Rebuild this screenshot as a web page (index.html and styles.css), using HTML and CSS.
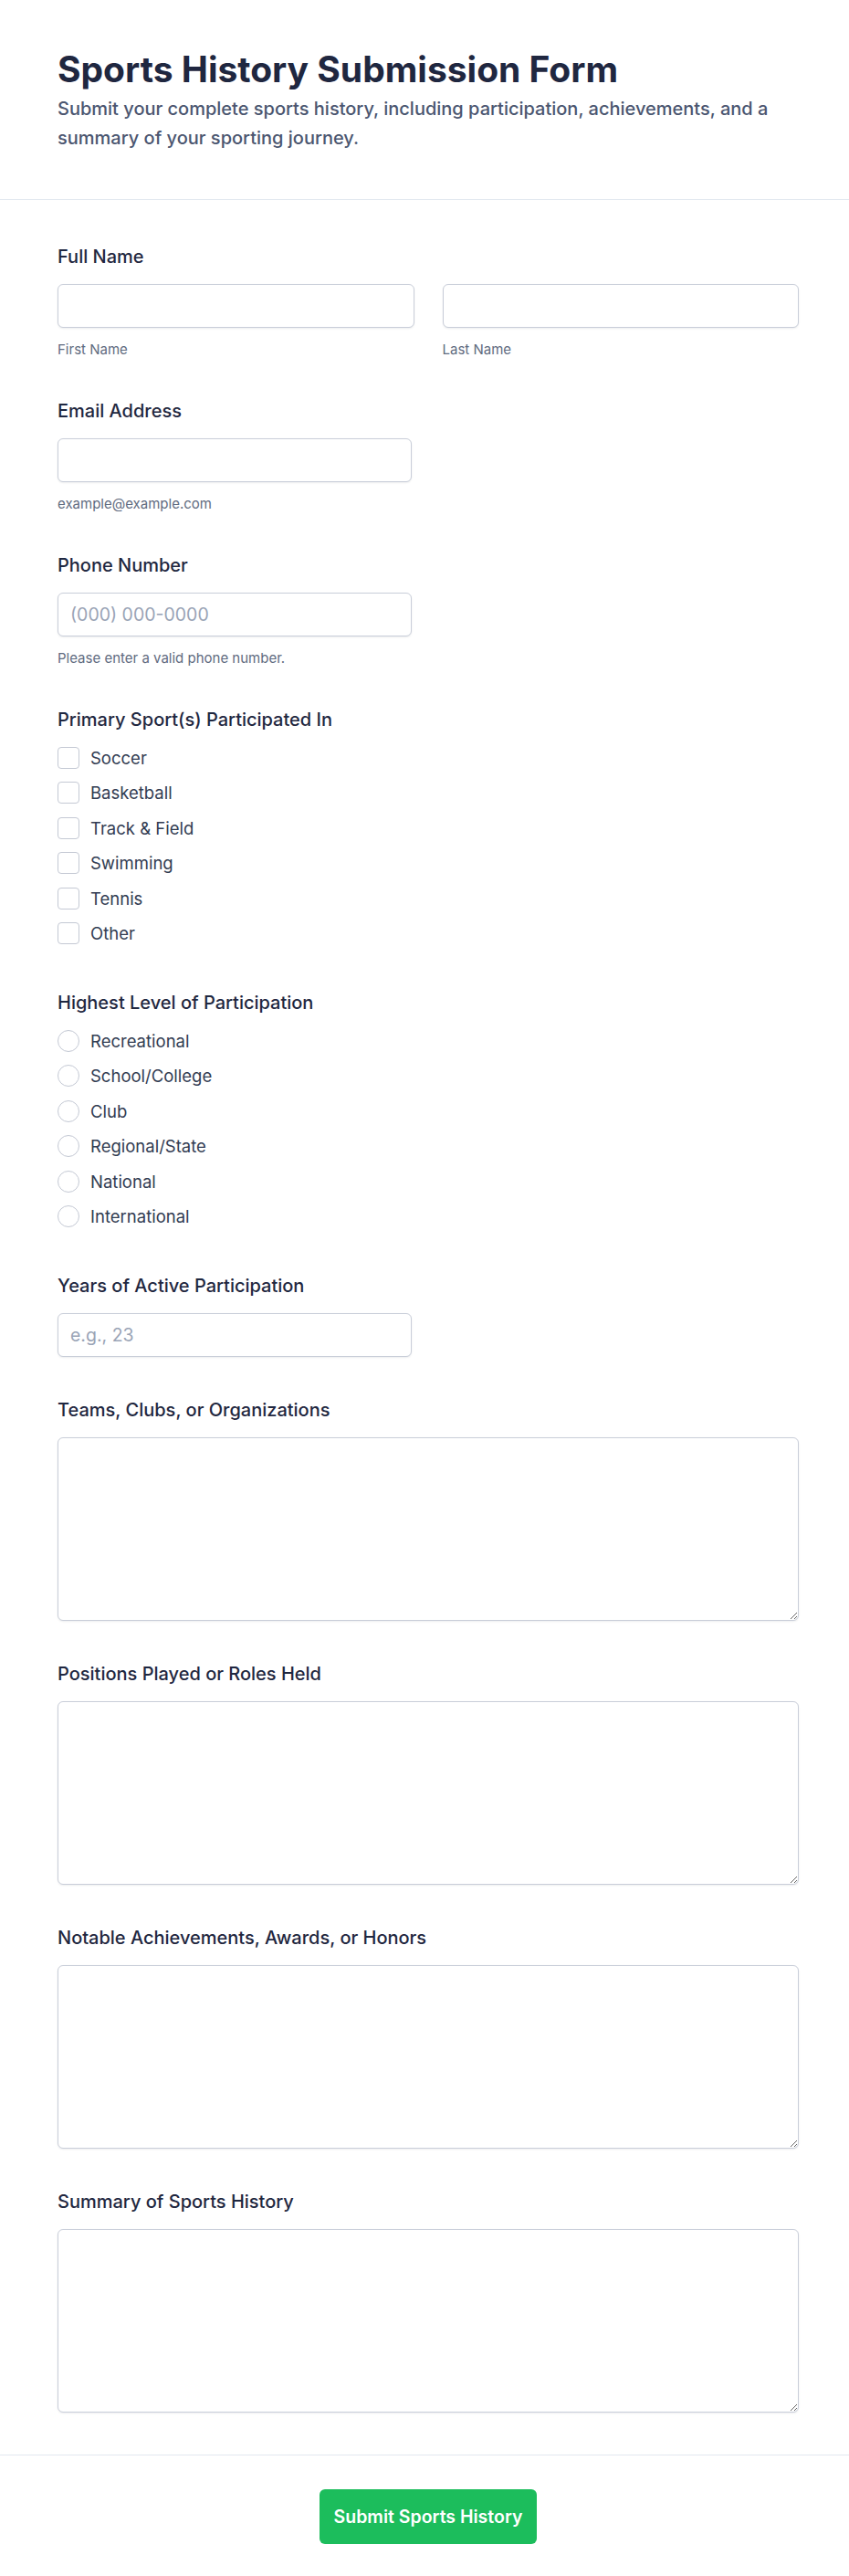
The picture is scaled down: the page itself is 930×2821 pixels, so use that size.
FILE: index.html
```html
<html>
<head>
    <meta charset="utf-8">
    <title>Sports History Submission Form</title>
    <link rel="stylesheet" href="styles.css">
</head>
<body>
    <div class="page">
        <div class="header">
            <h1 class="title">Sports History Submission Form</h1>
            <p class="subtitle">Submit your complete sports history, including participation, achievements, and a summary of your sporting journey.</p>
        </div>

        <form class="form" onsubmit="return false">
            <div class="field">
                <label class="label">Full Name</label>
                <div class="name-row">
                    <div>
                        <input type="text" class="input">
                        <div class="hint">First Name</div>
                    </div>
                    <div>
                        <input type="text" class="input">
                        <div class="hint">Last Name</div>
                    </div>
                </div>
            </div>

            <div class="field">
                <label class="label">Email Address</label>
                <input type="email" class="input half">
                <div class="hint">example@example.com</div>
            </div>

            <div class="field">
                <label class="label">Phone Number</label>
                <input type="tel" class="input half" placeholder="(000) 000-0000">
                <div class="hint">Please enter a valid phone number.</div>
            </div>

            <div class="field">
                <label class="label">Primary Sport(s) Participated In</label>
                <div class="options">
                    <label class="option"><input type="checkbox" class="check"> Soccer</label>
                    <label class="option"><input type="checkbox" class="check"> Basketball</label>
                    <label class="option"><input type="checkbox" class="check"> Track &amp; Field</label>
                    <label class="option"><input type="checkbox" class="check"> Swimming</label>
                    <label class="option"><input type="checkbox" class="check"> Tennis</label>
                    <label class="option"><input type="checkbox" class="check"> Other</label>
                </div>
            </div>

            <div class="field">
                <label class="label">Highest Level of Participation</label>
                <div class="options">
                    <label class="option"><input type="radio" name="level" class="radio"> Recreational</label>
                    <label class="option"><input type="radio" name="level" class="radio"> School/College</label>
                    <label class="option"><input type="radio" name="level" class="radio"> Club</label>
                    <label class="option"><input type="radio" name="level" class="radio"> Regional/State</label>
                    <label class="option"><input type="radio" name="level" class="radio"> National</label>
                    <label class="option"><input type="radio" name="level" class="radio"> International</label>
                </div>
            </div>

            <div class="field">
                <label class="label">Years of Active Participation</label>
                <input type="number" class="input half" placeholder="e.g., 23">
            </div>

            <div class="field">
                <label class="label">Teams, Clubs, or Organizations</label>
                <textarea class="textarea"></textarea>
            </div>

            <div class="field">
                <label class="label">Positions Played or Roles Held</label>
                <textarea class="textarea"></textarea>
            </div>

            <div class="field">
                <label class="label">Notable Achievements, Awards, or Honors</label>
                <textarea class="textarea"></textarea>
            </div>

            <div class="field">
                <label class="label">Summary of Sports History</label>
                <textarea class="textarea"></textarea>
            </div>
        </form>

        <div class="footer">
            <button type="button" class="submit">Submit Sports History</button>
        </div>
    </div>
</body>
</html>
```

FILE: styles.css
```css
* {
    box-sizing: border-box;
}
body {
    margin: 0;
    font-family: Inter, "Noto Sans", sans-serif;
    background-color: #ffffff;
    color: #1e293b;
}
.header {
    padding: 56px 55px 51px 63px;
    border-bottom: 1px solid #e2e8f0;
}
.title {
    margin: 0;
    font-size: 39px;
    line-height: 40px;
    font-weight: 700;
    color: #1f2740;
}
.subtitle {
    margin: 8px 0 0;
    font-size: 20px;
    line-height: 31.5px;
    font-weight: 500;
    color: #4b5670;
}
.form {
    padding: 48px 55px 30px 63px;
}
.field {
    margin-bottom: 44px;
}
.field:last-child {
    margin-bottom: 0;
}
.label {
    display: block;
    margin-bottom: 16px;
    font-size: 20px;
    line-height: 28px;
    font-weight: 500;
    color: #1f2740;
}
.name-row {
    display: grid;
    grid-template-columns: 1fr 1fr;
    gap: 31px;
}
.input {
    display: block;
    width: 100%;
    height: 48px;
    padding: 0 13px;
    font-family: inherit;
    font-size: 19.5px;
    color: #1e293b;
    background-color: #fff;
    border: 1px solid #c9ced9;
    border-radius: 6px;
    box-shadow: 0 1px 2px rgba(15, 23, 42, 0.08);
    outline: none;
}
.input.half {
    width: 388px;
}
.input::placeholder,
.textarea::placeholder {
    color: #9aa4b6;
}
.input[type=number]::-webkit-inner-spin-button {
    -webkit-appearance: none;
}
.hint {
    margin-top: 15px;
    font-size: 15px;
    line-height: 18px;
    color: #5f6b80;
}
.options {
    display: flex;
    flex-direction: column;
    gap: 14.4px;
    padding-bottom: 6px;
}
.option {
    display: flex;
    align-items: center;
    gap: 12px;
    height: 24px;
    font-size: 18.5px;
    line-height: 24px;
    color: #323c52;
}
.check,
.radio {
    -webkit-appearance: none;
    appearance: none;
    flex: none;
    width: 24px;
    height: 24px;
    margin: 0;
    background-color: #fff;
    border: 1px solid #c4c9d4;
}
.check {
    border-radius: 4px;
}
.radio {
    border-radius: 50%;
}
.textarea {
    display: block;
    width: 100%;
    height: 201px;
    padding: 12px 13px;
    font-family: inherit;
    font-size: 19.5px;
    color: #1e293b;
    background-color: #fff;
    border: 1px solid #c9ced9;
    border-radius: 6px;
    box-shadow: 0 1px 2px rgba(15, 23, 42, 0.08);
    resize: vertical;
    outline: none;
}
.footer {
    display: flex;
    justify-content: center;
    padding: 37px 55px 49px 63px;
    border-top: 1px solid #e2e8f0;
}
.submit {
    height: 60px;
    padding: 0 16px;
    font-family: inherit;
    font-size: 19.5px;
    font-weight: 600;
    color: #fff;
    background-color: #1cbd5c;
    border: none;
    border-radius: 6px;
    cursor: pointer;
}
.submit:hover {
    background-color: #16a34a;
}
```
